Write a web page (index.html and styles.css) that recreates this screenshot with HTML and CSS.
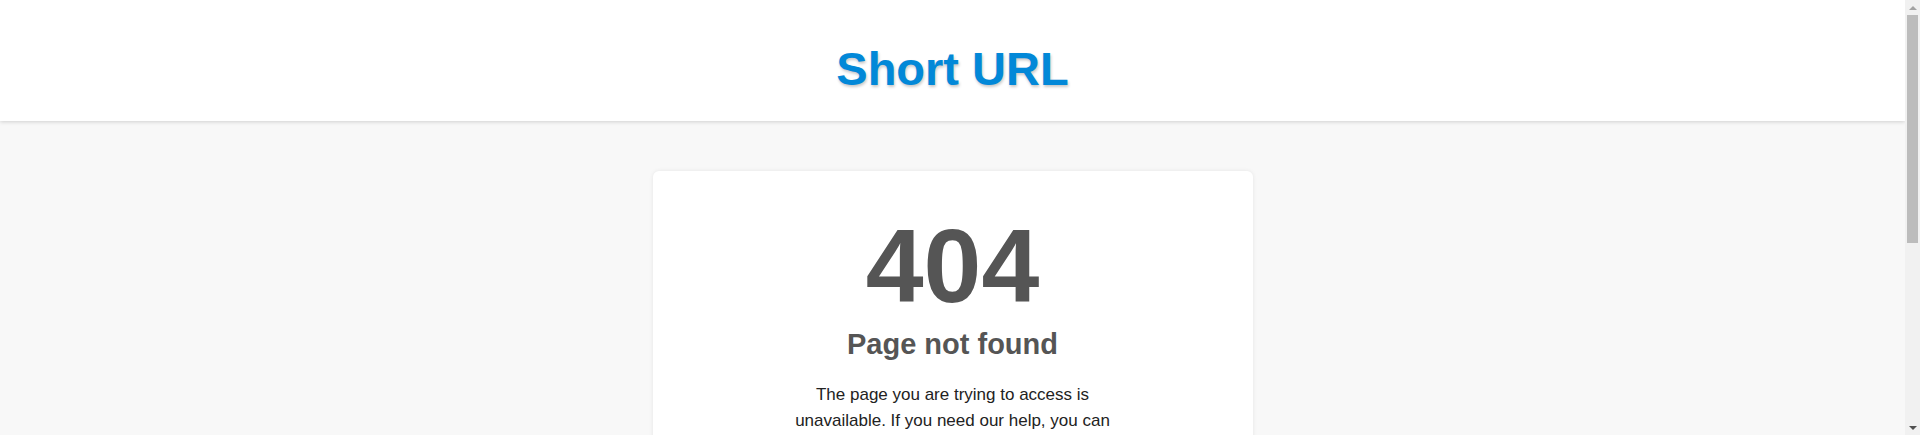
FILE: index.html
```html
<!DOCTYPE html>
<html lang="en">
<head>
<meta charset="utf-8">
<title>Short URL - Page not found</title>
<link rel="stylesheet" href="styles.css">
</head>
<body>
<div class="page">
  <header class="site-header">
    <h1 class="brand">Short URL</h1>
  </header>
  <main class="main">
    <section class="card">
      <h2 class="code">404</h2>
      <h3 class="title">Page not found</h3>
      <p class="message">The page you are trying to access is unavailable. If you need our help, you can contact us or go back to the home page.</p>
      <a class="button" href="#">Back to home</a>
    </section>
  </main>
</div>
<div class="scrollbar" aria-hidden="true">
  <div class="arrow arrow-up"></div>
  <div class="track"><div class="thumb"></div></div>
  <div class="arrow arrow-down"></div>
</div>
</body>
</html>
```

FILE: styles.css
```css
html, body {
  margin: 0;
  padding: 0;
}
body {
  height: 100vh;
  overflow: hidden;
  display: flex;
  background: #f8f8f8;
  font-family: "Liberation Sans", Arial, sans-serif;
  color: #333;
}
.page {
  flex: 1;
  min-width: 0;
  overflow: hidden;
}
.site-header {
  background: #fff;
  height: 121px;
  box-sizing: border-box;
  padding-top: 41px;
  box-shadow: 0 1px 4px rgba(0, 0, 0, 0.16);
  text-align: center;
  position: relative;
}
.brand {
  margin: 0;
  font-size: 47px;
  line-height: 56px;
  font-weight: bold;
  color: #0288d8;
  text-shadow: 1px 2px 3px rgba(0, 0, 0, 0.22);
}
.main {
  display: flex;
  justify-content: center;
  padding-top: 50px;
}
.card {
  width: 600px;
  box-sizing: border-box;
  background: #fff;
  border-radius: 6px;
  box-shadow: 0 0 4px rgba(0, 0, 0, 0.08);
  padding: 35px 40px 40px;
  display: flex;
  flex-direction: column;
  align-items: center;
  text-align: center;
}
.code {
  margin: 0;
  font-size: 104px;
  line-height: 120px;
  font-weight: bold;
  color: #555;
}
.title {
  margin: 1px 0 0;
  font-size: 29px;
  line-height: 35px;
  font-weight: bold;
  color: #555;
}
.message {
  margin: 20px 0 0;
  max-width: 340px;
  font-size: 17px;
  line-height: 25.5px;
  color: #222;
}
.button {
  margin-top: 24px;
  padding: 10px 24px;
  background: #0288d8;
  color: #fff;
  border-radius: 4px;
  text-decoration: none;
  font-size: 16px;
}
.scrollbar {
  width: 15px;
  flex: none;
  background: #f1f1f1;
  display: flex;
  flex-direction: column;
}
.arrow {
  height: 15px;
  display: flex;
  align-items: center;
  justify-content: center;
}
.arrow::before {
  content: "";
  width: 0;
  height: 0;
  border-left: 4px solid transparent;
  border-right: 4px solid transparent;
}
.arrow-up::before {
  border-bottom: 4px solid #a3a3a3;
}
.arrow-down::before {
  border-top: 4px solid #505050;
}
.track {
  flex: 1;
  padding: 0 2px;
}
.thumb {
  height: 228px;
  background: #bcbcbc;
}
```
